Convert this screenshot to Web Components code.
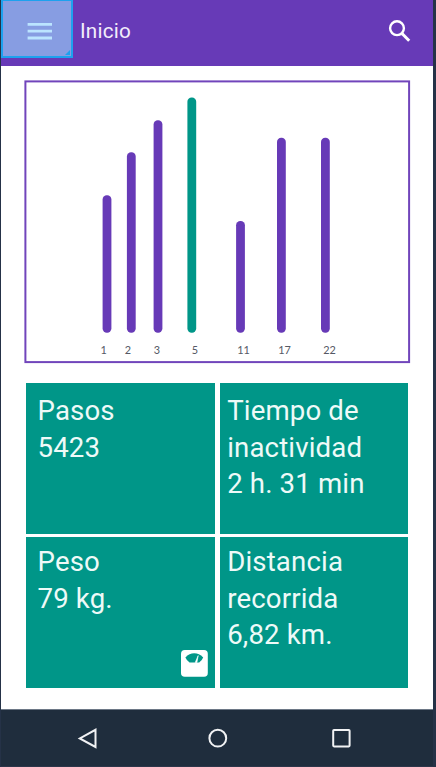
<!DOCTYPE html>
<html lang="es">
<head>
<meta charset="utf-8">
<title>Inicio</title>
<style>
html,body{margin:0;height:100%;overflow:hidden}
body{font-family:Roboto,"Liberation Sans",sans-serif}
</style>
</head>
<body>
<phone-screen>
  <app-bar slot="bar">Inicio</app-bar>
  <bar-chart></bar-chart>
  <tile-grid>
    <stat-tile><span>Pasos</span><span>5423</span></stat-tile>
    <stat-tile class="right"><span>Tiempo de</span><span>inactividad</span><span>2 h. 31 min</span></stat-tile>
    <stat-tile class="lower"><span>Peso</span><span>79 kg.</span><scale-icon slot="icon"></scale-icon></stat-tile>
    <stat-tile class="lower right"><span>Distancia</span><span>recorrida</span><span>6,82 km.</span></stat-tile>
  </tile-grid>
  <nav-bar slot="nav"></nav-bar>
</phone-screen>
<script>
function define(name, html, setup) {
  customElements.define(name, class extends HTMLElement {
    constructor() {
      super();
      const t = document.createElement('template');
      t.innerHTML = html;
      this.attachShadow({mode: 'open'}).appendChild(t.content.cloneNode(true));
      if (setup) setup(this.shadowRoot);
    }
  });
}

define('phone-screen', `
<style>
:host{display:flex;flex-direction:column;box-sizing:border-box;width:436px;height:767px;
 background:#fff;border-left:1px solid #253247;border-right:3px solid #253247}
main{flex:1;display:flex;flex-direction:column;align-items:flex-start;padding:14px 0 0 23px}
</style>
<slot name="bar"></slot><main><slot></slot></main><slot name="nav"></slot>`);

define('app-bar', `
<style>
:host{display:flex;height:66px;flex:none;background:#673ab7;color:#f3edfb;font-size:20.7px;letter-spacing:.2px}
.menu{box-sizing:border-box;width:72px;height:58px;border:2px solid #1da1ee;border-top-width:1px;background:#879de2;flex:none}
.menu svg,.search{display:block}
.title{flex:1;padding-left:7px;line-height:62px}
.search{margin:17px 19px 0 0}
</style>
<div class="menu"><svg width="68" height="55" viewBox="3 1 68 55">
<path d="M27.6 24.3h24.4M27.6 31.2h24.4M27.6 38h24.4" stroke="#bbe4ff" stroke-width="2.8"/>
<path d="M70 50v5h-5z" fill="#1da1ee"/></svg></div>
<div class="title"><slot></slot></div>
<svg class="search" width="28" height="28" viewBox="386 17 28 28" fill="none" stroke="#fff" stroke-width="2.4">
<circle cx="397" cy="28.2" r="6.9"/><path d="M402 33.4l1 1" stroke-width="3"/><path d="M402.5 34l6.7 6.8" stroke-width="3"/></svg>`);

define('bar-chart', `
<style>
:host{display:block;box-sizing:border-box;width:387px;height:283px;flex:none}
svg{display:block;overflow:visible}
text{font:10.9px Lato,sans-serif;fill:#555965;text-anchor:middle}
</style>
<svg width="387" height="283" viewBox="24 80 387 283">
<rect x="25.4" y="81.4" width="383.7" height="280.7" fill="#fff" stroke="#7145bb" stroke-width="2"/>
<g></g></svg>`, root => {
  const bars = [[107, 195.3, 103.7, 1], [131.3, 152.2, 128, 2], [158, 120.2, 157, 3], [191.8, 97.6, 194.8, 5],
    [240.5, 221, 243.6, 11], [281.4, 137.8, 284.6, 17], [325.4, 137.8, 329.5, 22]];
  root.querySelector('g').innerHTML = bars.map(([x, top, lx, day]) =>
    `<rect x="${x - 4.4}" y="${top}" width="8.8" height="${332.8 - top}" rx="4.2" fill="${day === 5 ? '#009688' : '#673ab7'}"/>
     <text x="${lx}" y="354">${day}</text>`).join('');
});

define('tile-grid', `
<style>
:host{display:grid;grid-template-columns:188.7px 188.7px;grid-template-rows:150.8px 151px;
 column-gap:5px;row-gap:3.6px;margin:20px 0 0 2px}
</style><slot></slot>`);

define('stat-tile', `
<style>
:host{display:flex;flex-direction:column;position:relative;box-sizing:border-box;background:#009688;color:#eefaf8;
 padding:10.2px 0 0 11.5px;font-size:27.6px;line-height:36.4px;letter-spacing:.15px;white-space:nowrap}
:host(.right){padding-left:7.5px}
:host(.lower){padding-top:7px}
::slotted([slot=icon]){position:absolute;right:7px;bottom:11px}
</style><slot></slot><slot name="icon"></slot>`);

define('scale-icon', `
<style>:host{display:block;width:27px;height:27px}svg{display:block}</style>
<svg width="27" height="27" viewBox="0 0 27 27">
<rect width="26.8" height="26.8" rx="3.8" fill="#fff"/>
<path d="M4.4 7.4Q8.3 3.2 13.2 3.2T22.2 7.4Q21 10.3 18.2 12.5H8.5Q5.6 10.3 4.4 7.4Z" fill="#009688"/>
<path d="M14.2 12.5L17.2 5.6L15.9 12.5Z" fill="#fff" stroke="#fff" stroke-width=".6"/></svg>`);

define('nav-bar', `
<style>
:host{display:block;box-sizing:border-box;height:58px;flex:none;background:#1f2d3d;border-top:1px solid #6d7886;border-bottom:1px solid #2c3549}
div{display:grid;grid-template-columns:75px 24px 106px 24px 100px 24px;height:56px;align-items:center}
svg{display:block;fill:none;stroke:#f1f2f4;stroke-width:2}
svg:nth-child(1){grid-column:2}svg:nth-child(2){grid-column:4}svg:nth-child(3){grid-column:6}
</style>
<div>
<svg width="24" height="24" viewBox="76 726 24 24"><path d="M95.5 729.8V747L79.8 738.4Z"/></svg>
<svg width="24" height="24" viewBox="206 726 24 24"><circle cx="217.8" cy="738.2" r="8.4"/></svg>
<svg width="24" height="24" viewBox="330 726 24 24"><rect x="333.2" y="730" width="16.4" height="16.4" rx=".8"/></svg>
</div>`);
</script>
</body>
</html>
